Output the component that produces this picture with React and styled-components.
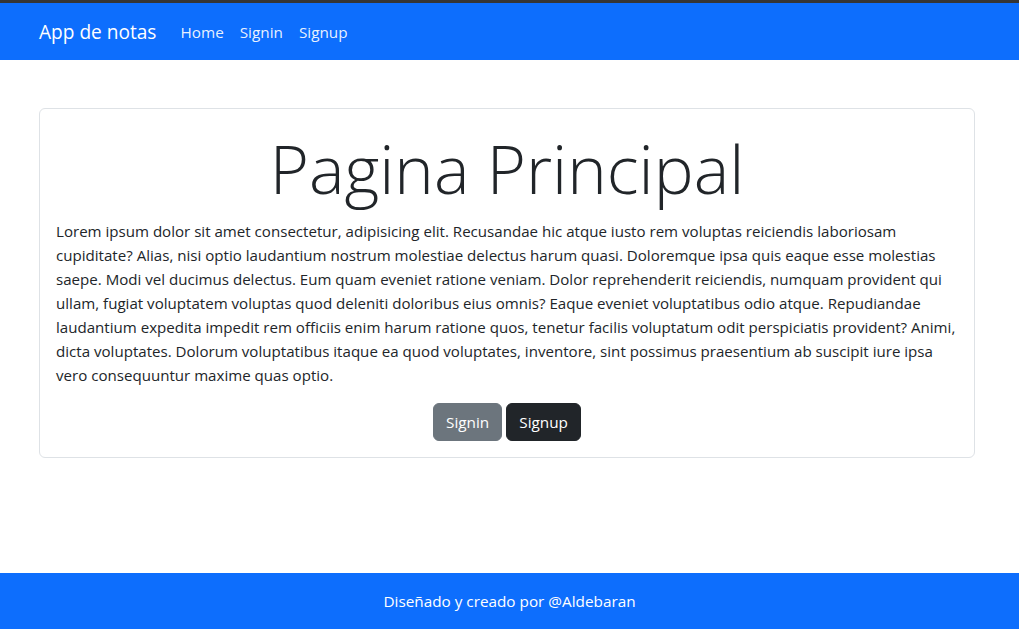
import React from "react";
import styled, { createGlobalStyle } from "styled-components";

const GlobalStyle = createGlobalStyle`
	* {
		box-sizing: border-box;
	}
	body {
		margin: 0;
		font-family: "Open Sans", "Noto Sans", sans-serif;
		font-size: 15.3px;
		line-height: 24px;
		color: #212529;
		background: #fff;
	}
`;

const Page = styled.div`
	display: flex;
	flex-direction: column;
	min-height: 629px;
`;

const Navbar = styled.nav`
	display: flex;
	align-items: center;
	height: 60px;
	padding: 0 39px;
	border-top: 3px solid #353535;
	background: #0d6efd;
`;

const Brand = styled.a`
	font-size: 19.1px;
	line-height: 30px;
	color: #fff;
	margin-right: 16px;
	text-decoration: none;
`;

const NavLink = styled.a`
	font-size: 15.3px;
	padding: 8px;
	color: rgba(255, 255, 255, 0.92);
	text-decoration: none;
`;

const Main = styled.main`
	flex: 1;
	padding: 48px 44px 0 39px;
`;

const Card = styled.section`
	border: 1px solid #dee2e6;
	border-radius: 6px;
	padding: 16px;
	text-align: center;
`;

const Title = styled.h1`
	margin: 0 0 8px;
	font-size: 67px;
	font-weight: 300;
	line-height: 86px;
`;

const Text = styled.p`
	margin: 0 0 16px;
	font-size: 15.1px;
	text-align: left;
`;

const Button = styled.button`
	font-family: inherit;
	font-size: 15.3px;
	line-height: 24px;
	padding: 6px 12px;
	margin: 0 2px;
	border: 1px solid ${(p) => p.$bg};
	border-radius: 6px;
	background: ${(p) => p.$bg};
	color: #fff;
`;

const Footer = styled.footer`
	display: flex;
	justify-content: center;
	align-items: center;
	height: 56px;
	background: #0d6efd;
	color: #fff;
`;

const App = () => {
	return (
		<Page>
			<GlobalStyle />
			<Navbar>
				<Brand href="#">App de notas</Brand>
				<NavLink href="#">Home</NavLink>
				<NavLink href="#">Signin</NavLink>
				<NavLink href="#">Signup</NavLink>
			</Navbar>
			<Main>
				<Card>
					<Title>Pagina Principal</Title>
					<Text>
						Lorem ipsum dolor sit amet consectetur, adipisicing elit. Recusandae
						hic atque iusto rem voluptas reiciendis laboriosam cupiditate? Alias,
						nisi optio laudantium nostrum molestiae delectus harum quasi.
						Doloremque ipsa quis eaque esse molestias saepe. Modi vel ducimus
						delectus. Eum quam eveniet ratione veniam. Dolor reprehenderit
						reiciendis, numquam provident qui ullam, fugiat voluptatem voluptas
						quod deleniti doloribus eius omnis? Eaque eveniet voluptatibus odio
						atque. Repudiandae laudantium expedita impedit rem officiis enim harum
						ratione quos, tenetur facilis voluptatum odit perspiciatis provident?
						Animi, dicta voluptates. Dolorum voluptatibus itaque ea quod
						voluptates, inventore, sint possimus praesentium ab suscipit iure ipsa
						vero consequuntur maxime quas optio.
					</Text>
					<Button $bg="#6c757d">Signin</Button>
					<Button $bg="#212529">Signup</Button>
				</Card>
			</Main>
			<Footer>Diseñado y creado por @Aldebaran</Footer>
		</Page>
	);
};

export default App;
